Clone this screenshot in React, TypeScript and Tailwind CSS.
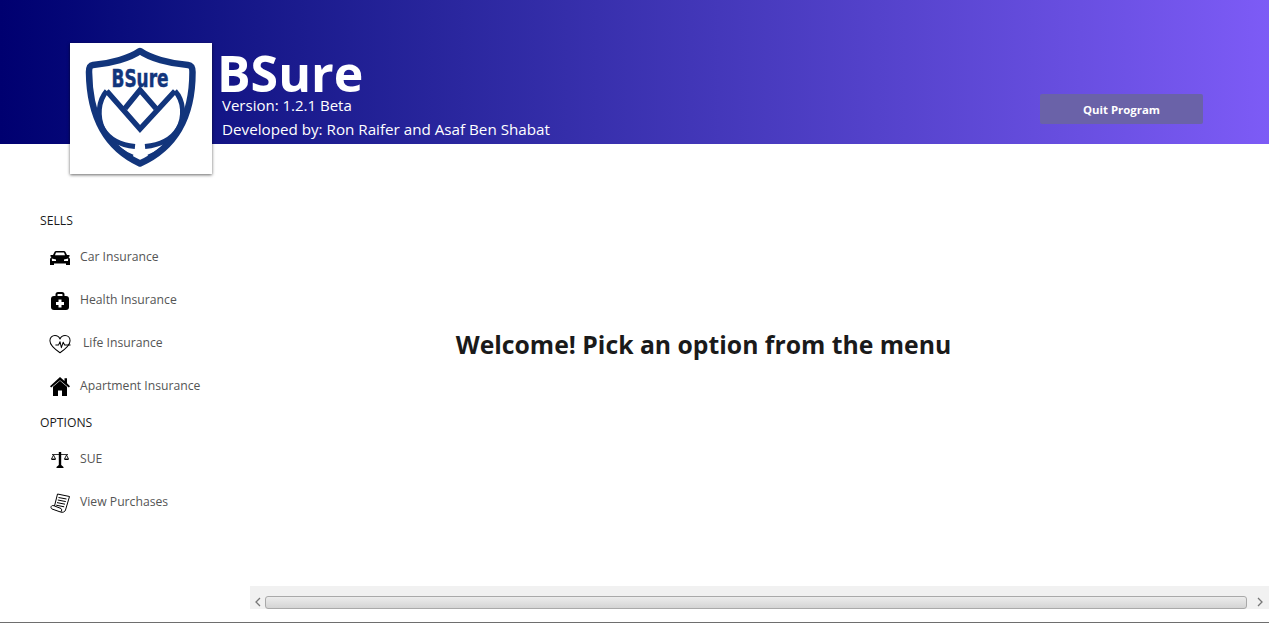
import type { ReactNode } from 'react';

const font = 'font-["Open_Sans","Noto_Sans",sans-serif]';

function Logo() {
  return (
    <svg width="142" height="131" viewBox="0 0 142 131">
      <g fill="none" stroke="#12357c" strokeLinejoin="round">
        <path
          d="M70 8 C60 15 41 20.5 23 22 C19.5 22.5 19 25 19 29 C19.5 66 30 102 70 120.5 C111 102 122.5 66 122.5 29 C122.5 25 122 22.5 118 22 C99 20.5 80 15 70 8 Z"
          strokeWidth="6.5"
        />
        <path d="M36.7 48 L70 86 L105 48" strokeWidth="5.5" strokeLinejoin="miter" />
        <path d="M36.7 48 C28 58 27 74 33 86 C39 96 50 102 65 103.5" strokeWidth="5" />
        <path d="M105 48 C114 58 115 74 108 86 C102 96 90 102 75 103.5" strokeWidth="5" />
        <path d="M55 65.5 L70 47 L86 65.5" strokeWidth="5.5" strokeLinejoin="miter" />
        <path d="M41 96 C47 104 55 110 63 113" strokeWidth="2.5" />
        <path d="M100 96 C94 104 86 110 78 113" strokeWidth="2.5" />
      </g>
      <text
        x="70"
        y="43.7"
        textAnchor="middle"
        fill="#12357c"
        stroke="#12357c"
        strokeWidth="0.5"
        fontFamily="'DejaVu Sans Condensed','Liberation Sans',sans-serif"
        fontWeight="700"
        fontSize="25"
        textLength="57"
        lengthAdjust="spacingAndGlyphs"
      >
        BSure
      </text>
    </svg>
  );
}

function CarIcon() {
  return (
    <svg width="20" height="14" viewBox="0 0 20 14">
      <path d="M0.5 4 H3 L4.5 1 C5 0.4 5.5 0 6.5 0 H13.5 C14.5 0 15 0.4 15.5 1 L17 4 H19.5 V5.5 L18.5 6 C19.5 7 20 7.5 20 9 V14 H16 V12.5 H4 V14 H0 V9 C0 7.5 0.5 7 1.5 6 L0.5 5.5 Z" fill="#000" />
      <path d="M5 4.3 L6 1.6 H14 L15 4.3 Z" fill="#fff" />
      <path d="M1.8 7.6 L6 8.6 V10 H2 Z M18.2 7.6 L14 8.6 V10 H18 Z" fill="#fff" />
    </svg>
  );
}

function MedkitIcon() {
  return (
    <svg width="18" height="18" viewBox="0 0 18 18">
      <rect x="5.5" y="1" width="7" height="6" rx="1.5" fill="none" stroke="#000" strokeWidth="2" />
      <rect x="0" y="4" width="18" height="14" rx="3" fill="#000" />
      <path d="M7.5 7.5 H10.5 V10 H13 V13 H10.5 V15.5 H7.5 V13 H5 V10 H7.5 Z" fill="#fff" />
    </svg>
  );
}

function HeartIcon() {
  return (
    <svg width="24" height="20" viewBox="0 0 24 20" fill="none" stroke="#000" strokeWidth="1.1" strokeLinejoin="round">
      <path d="M12 19.5 C6 15.5 1 11.5 1 6.5 C1 3 3.5 0.8 6.5 0.8 C9 0.8 11 2.3 12 4.5 C13 2.3 15 0.8 17.5 0.8 C20.5 0.8 23 3 23 6.5 C23 11.5 18 15.5 12 19.5 Z" />
      <path d="M7 11 H10.5 L12 7.5 L13.5 14 L15.5 8 L17 11 H23.5" fill="#fff" />
    </svg>
  );
}

function HomeIcon() {
  return (
    <svg width="20" height="19" viewBox="0 0 20 19" fill="#000">
      <path d="M10 0 L14.5 4 V1.2 H17 V6.3 L20 9.2 L18.8 10.6 L10 3.2 L1.2 10.6 L0 9.2 Z" />
      <path d="M3 9.8 L10 3.8 L17 9.8 V19 H12 V13.5 H8 V19 H3 Z" />
    </svg>
  );
}

function ScaleIcon() {
  return (
    <svg width="18" height="16" viewBox="0 0 18 16">
      <path d="M7.8 0 H10.2 V13 L12.5 15 V16 H5.5 V15 L7.8 13 Z" fill="#000" />
      <path d="M1 2.2 H17 V3 H1 Z" fill="#000" />
      <path d="M2.5 3 L0.5 7 H4.5 Z M15.5 3 L13.5 7 H17.5 Z" fill="none" stroke="#000" strokeWidth="0.9" />
      <path d="M0.5 7 H4.5 V8 H0.5 Z M13.5 7 H17.5 V8 H13.5 Z" fill="#000" />
    </svg>
  );
}

function ReceiptIcon() {
  return (
    <svg width="20" height="20" viewBox="0 0 20 20" fill="none" stroke="#000" strokeWidth="1" strokeLinejoin="round">
      <path d="M7.5 1 L19.5 3.5 L15.5 17 C15 19 12.5 19.8 10.5 19 L2 16 C0.3 15 0.8 12.5 3 12.5 L4.5 13 Z" />
      <path d="M4.5 13 L11 15.5 C12 16 12 18 10.5 19" />
      <path d="M8.5 4.5 L16.5 6 M7.8 7 L15.8 8.6 M7 9.6 L15 11.2 M6.2 12.2 L14.2 13.8" />
    </svg>
  );
}

function MenuItem({ icon, label, shift }: { icon: ReactNode; label: string; shift?: boolean }) {
  return (
    <div className="flex h-[43px] items-center pl-[49px]">
      <span className="flex w-[22px] items-center justify-center">{icon}</span>
      <span className={`${shift ? 'ml-3' : 'ml-[9px]'} text-[12.2px] text-[#555555]`}>{label}</span>
    </div>
  );
}

export default function App() {
  return (
    <div className={`relative flex h-[623px] w-[1269px] flex-col overflow-hidden bg-white ${font}`}>
      {/* Kopfzeile */}
      <header className="flex h-[144px] shrink-0 bg-gradient-to-r from-[#000070] to-[#7d5bf6]">
        <div className="ml-[222px] flex flex-col text-white">
          <h1 className="-ml-[5px] mt-[50px] h-[46px] text-[50px] font-bold leading-[46px]">BSure</h1>
          <span className="text-[15px] leading-[18px]">Version: 1.2.1 Beta</span>
          <span className="mt-[5px] text-[15.2px] leading-[20px]">Developed by: Ron Raifer and Asaf Ben Shabat</span>
        </div>
        <button className="ml-auto mr-[66px] mt-[94px] flex h-[30px] w-[163px] items-center justify-center rounded-[2px] bg-[#6a62a8] pt-px text-[11.4px] font-bold text-white">
          Quit Program
        </button>
      </header>

      {/* Logo liegt über der Kopfzeile */}
      <div className="absolute left-[70px] top-[43px] h-[131px] w-[142px] bg-white shadow-[0_1px_3px_rgba(0,0,0,0.6)]">
        <Logo />
      </div>

      <div className="flex min-h-0 flex-1">
        {/* Seitenleiste */}
        <aside className="w-[250px] shrink-0 pt-[68px]">
          <div className="pl-10 text-[12.2px] leading-[18px] text-[#1a1a1a]">SELLS</div>
          <div className="mt-[6px]">
            <MenuItem icon={<CarIcon />} label="Car Insurance" />
            <MenuItem icon={<MedkitIcon />} label="Health Insurance" />
            <MenuItem icon={<HeartIcon />} label="Life Insurance" shift />
            <MenuItem icon={<HomeIcon />} label="Apartment Insurance" />
          </div>
          <div className="mt-[6px] pl-10 text-[12.2px] leading-[18px] text-[#1a1a1a]">OPTIONS</div>
          <div className="mt-[6px]">
            <MenuItem icon={<ScaleIcon />} label="SUE" />
            <MenuItem icon={<ReceiptIcon />} label="View Purchases" />
          </div>
        </aside>

        {/* Inhalt */}
        <main className="flex min-w-0 flex-1 flex-col">
          <div className="flex flex-1 items-start justify-center">
            <h2 className="mt-[181px] pr-[112px] text-[24.75px] font-bold leading-[40px] text-[#1a1a1a]">
              Welcome! Pick an option from the menu
            </h2>
          </div>
          <div className="mb-[13px] h-[23px] bg-[#f1f1f1] pt-[9px]">
            <div className="flex h-[14px] items-center bg-[#f1f1f1]">
              <svg width="15" height="14" viewBox="0 0 15 14" fill="none" stroke="#777" strokeWidth="1.3">
                <path d="M10 3 L6 7 L10 11" />
              </svg>
              <div className="h-[13px] flex-1 rounded-[3px] border border-[#a9a9a9] bg-gradient-to-b from-[#ececec] to-[#d4d4d4]" />
              <svg width="22" height="14" viewBox="0 0 22 14" fill="none" stroke="#777" strokeWidth="1.3">
                <path d="M11 3 L15 7 L11 11" />
              </svg>
            </div>
          </div>
        </main>
      </div>

      <div className="h-px shrink-0 bg-[#6e6e6e]" />
    </div>
  );
}
